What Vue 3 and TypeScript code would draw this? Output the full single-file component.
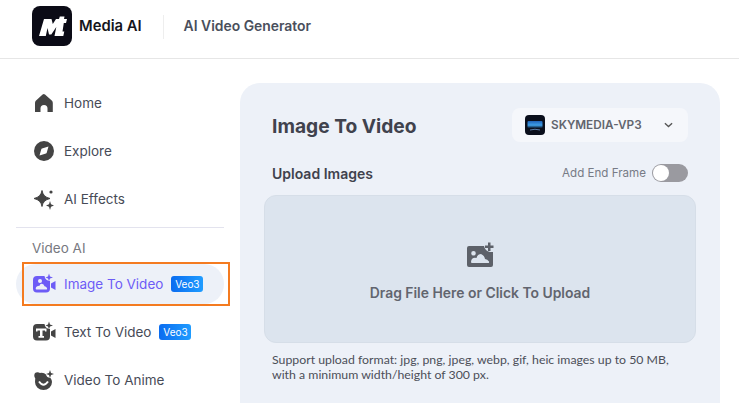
<script setup lang="ts">
const mainNav = [
  { label: 'Home', icon: 'home' },
  { label: 'Explore', icon: 'explore' },
  { label: 'AI Effects', icon: 'effects' },
]
const videoNav = [
  { label: 'Image To Video', icon: 'image', badge: true, active: true },
  { label: 'Text To Video', icon: 'text', badge: true, active: false },
  { label: 'Video To Anime', icon: 'anime', badge: false, active: false },
]
</script>

<template>
  <div class="page">
    <header class="header">
      <div class="logo">
        <svg viewBox="0 0 40 40" width="40" height="40">
          <rect width="40" height="40" rx="8" fill="#0b0b16" />
          <path d="M7 30 L12 13 H19.500 L20.800 18 L24 13 H27 L27.800 10.500 H32.500 L32 13 H35 L34 17 H31.800 L30.500 25.500 H32.300 L31.300 30 H22.500 L24.300 21 L19.300 28.500 H17 L15.500 22 L13.800 30 Z" fill="#fff" />
        </svg>
      </div>
      <span class="brand">Media AI</span>
      <span class="header-line"></span>
      <span class="header-title">AI Video Generator</span>
    </header>

    <div class="body">
      <aside class="sidebar">
        <a v-for="item in mainNav" :key="item.label" class="nav-item">
          <svg class="nav-icon" viewBox="0 0 22 22" width="22" height="22" fill="#444">
            <path v-if="item.icon === 'home'" d="M11.800 2 Q12.300 2 13 2.600 L20 8.800 Q20.800 9.600 20.800 11 V20 H15.500 V16.500 Q15.500 13 12 13 Q8.500 13 8.500 16.500 V20 H3 V11 Q3 9.600 3.800 8.800 L10.600 2.600 Q11.300 2 11.800 2 Z" />
            <path v-else-if="item.icon === 'explore'" fill-rule="evenodd" d="M12 1 A10 10 0 1 1 12 21 A10 10 0 1 1 12 1 Z M16.500 6.500 L10 8.500 Q9.500 8.700 9.300 9.200 L7.500 15.500 L14 13.500 Q14.500 13.300 14.700 12.800 Z" />
            <template v-else>
              <path d="M10 2.500 Q11 9 18 10.500 Q11 12 10 18.500 Q9 12 2 10.500 Q9 9 10 2.500 Z" stroke="#444" stroke-width="1" stroke-linejoin="round" />
              <path d="M18 13 L19 16.300 L22 17.500 L19 18.700 L18 22 L17 18.700 L14 17.500 L17 16.300 Z" />
              <circle cx="19" cy="4" r="1.600" />
            </template>
          </svg>
          <span>{{ item.label }}</span>
        </a>

        <div class="side-line"></div>
        <div class="side-title">Video AI</div>

        <a
          v-for="item in videoNav"
          :key="item.label"
          class="nav-item video-item"
          :class="{ active: item.active }"
        >
          <svg class="nav-icon wide" viewBox="0 0 24 22" width="24" height="22" :fill="item.active ? '#6d5cf6' : '#444'">
            <template v-if="item.icon === 'image'">
              <path fill-rule="evenodd" d="M5 3 H12.500 Q13 7.500 18 8 V15.500 Q18 19.500 14 19.500 H5 Q1 19.500 1 15.500 V7 Q1 3 5 3 Z M8 6 A2 2 0 1 0 8 10 A2 2 0 1 0 8 6 Z M4.500 16.500 H14.500 Q15.500 16.500 15 15 Q14 13.300 12.500 13.300 Q11.800 10.500 9.500 10.800 Q8 11 7.500 12.800 Q4 12.800 3.700 15.500 Q3.700 16.500 4.500 16.500 Z" />
              <path d="M19 10.500 L23.500 8 V17 L19 14.500 Z" />
              <path d="M17 0.500 L18 3.500 L21 4.500 L18 5.500 L17 8 L16 5.500 L13.500 4.500 L16 3.500 Z" />
            </template>
            <template v-else-if="item.icon === 'text'">
              <path fill-rule="evenodd" d="M5 3 H12.500 Q13 7.500 18 8 V15.500 Q18 19.500 14 19.500 H5 Q1 19.500 1 15.500 V7 Q1 3 5 3 Z M4 7.500 V10.500 H5.500 V9.500 H8 V15 H6.500 V16.700 H12 V15 H10.500 V9.500 H13 V10.500 H14.500 V7.500 Z" />
              <path d="M19 10.500 L23.500 8 V17 L19 14.500 Z" />
              <path d="M17 0.500 L18 3.500 L21 4.500 L18 5.500 L17 8 L16 5.500 L13.500 4.500 L16 3.500 Z" />
            </template>
            <template v-else>
              <circle cx="5.500" cy="6.500" r="3.200" />
              <path d="M5 5 Q11 2.500 14 5.500 Q14.500 8.500 18.500 9 Q20 11 20 13 A8.500 8 0 0 1 3 13 Q3 8 5 5 Z" />
              <path d="M7 12.500 Q11.500 19 16 12.500" fill="none" stroke="#fff" stroke-width="2" />
              <path d="M18 1 L19 4 L22 5 L19 6 L18 9 L17 6 L14 5 L17 4 Z" />
            </template>
          </svg>
          <span>{{ item.label }}</span>
          <span v-if="item.badge" class="badge">Veo3</span>
        </a>
      </aside>

      <main class="panel">
        <div class="panel-head">
          <h1>Image To Video</h1>
          <div class="model-select">
            <svg viewBox="0 0 20 20" width="20" height="20">
              <defs>
                <linearGradient id="model-g" x1="0" y1="0" x2="0" y2="1">
                  <stop offset="0" stop-color="#1f62b8" />
                  <stop offset="0.6" stop-color="#3fa0e8" />
                  <stop offset="1" stop-color="#0a1a30" />
                </linearGradient>
              </defs>
              <rect width="20" height="20" rx="4" fill="#0a0f1c" />
              <rect x="2.500" y="6" width="15" height="7" rx="1" fill="url(#model-g)" />
              <path d="M5 15 Q10 13.500 15 15" stroke="#5d7fa8" stroke-width="1" fill="none" />
            </svg>
            <span class="model-name">SKYMEDIA-VP3</span>
            <svg class="chevron" viewBox="0 0 10 6" width="9" height="6" fill="none" stroke="#555" stroke-width="1.500">
              <path d="M1 1 L5 4.700 L9 1" />
            </svg>
          </div>
        </div>

        <div class="upload-head">
          <span class="upload-title">Upload Images</span>
          <div class="end-frame">
            <span>Add End Frame</span>
            <span class="switch"><i></i></span>
          </div>
        </div>

        <div class="dropzone">
          <svg viewBox="0 0 28 26" width="28" height="26">
            <path fill="#5d6169" fill-rule="evenodd" d="M3 4 H18 Q19 9 24 10 L27 10 V23 Q27 25 25 25 H3 Q1 25 1 23 V6 Q1 4 3 4 Z M7.500 9 A2.300 2.300 0 1 0 7.500 13.600 A2.300 2.300 0 1 0 7.500 9 Z M6 21 H22 Q23.500 21 23 19.500 Q21.500 17 19 17 Q18.500 13.500 15 12 Q11.500 12 10.500 16 Q5.500 15 5 20 Q5 21 6 21 Z" />
            <path d="M22 0.500 H24.500 V3.500 H27.500 V6 H24.500 V9 H22 V6 H19 V3.500 H22 Z" fill="#5d6169" />
          </svg>
          <p>Drag File Here or Click To Upload</p>
        </div>

        <p class="hint">Support upload format: jpg, png, jpeg, webp, gif, heic images up to 50 MB, with a minimum width/height of 300 px.</p>
      </main>
    </div>
  </div>
</template>

<style>
html, body {
  margin: 0;
  background: #fff;
  overflow: hidden;
}
</style>

<style scoped>
.page {
  width: 739px;
  height: 403px;
  overflow: hidden;
  font-family: Inter, "Liberation Sans", sans-serif;
  color: #444;
}

.header {
  height: 59px;
  box-sizing: border-box;
  border-bottom: 1px solid #e6e6e6;
  display: flex;
  align-items: flex-start;
  padding: 6px 0 0 32px;
}

.logo {
  width: 40px;
  height: 40px;
}

.brand {
  margin: 9px 0 0 7px;
  font-size: 14.8px;
  line-height: 22px;
  font-weight: 600;
  color: #15151c;
}

.header-line {
  width: 1px;
  height: 24px;
  margin: 9px 20px 0 21px;
  background: #eeeeee;
}

.header-title {
  margin-top: 9px;
  font-size: 13.9px;
  line-height: 22px;
  font-weight: 600;
  color: #4a4f5c;
}

.body {
  display: flex;
}

.sidebar {
  width: 208px;
  margin: 20px 0 0 16px;
  flex: none;
}

.nav-item {
  display: flex;
  align-items: center;
  height: 48px;
  padding-left: 16px;
  font-size: 13.5px;
  color: #474b57;
}

.nav-icon {
  margin: 0 10px 0 0;
  flex: none;
}

.nav-icon.wide {
  margin-right: 8px;
}

.side-line {
  height: 1px;
  margin-top: 4px;
  background: #e3e3ee;
}

.side-title {
  margin: 12px 0 0 16px;
  font-size: 13.5px;
  line-height: 17px;
  color: #77797f;
}

.video-item {
  position: relative;
}

.video-item.active {
  margin-top: 7px;
  height: 40px;
  margin-bottom: 4px;
  border-radius: 20px;
  background: #edf1f8;
  color: #6d5cf6;
}

.video-item.active::after {
  content: "";
  position: absolute;
  left: 6px;
  right: -6px;
  top: -2px;
  bottom: -2px;
  border: 2px solid #f47b20;
  pointer-events: none;
}

.badge {
  margin-left: 8px;
  width: 32px;
  height: 16px;
  border-radius: 3px;
  background: linear-gradient(90deg, #0a6cf0, #1f9cff);
  color: #fff;
  font-size: 10px;
  line-height: 16px;
  text-align: center;
}

.panel {
  width: 480px;
  height: 400px;
  margin: 24px 0 0 16px;
  box-sizing: border-box;
  padding: 25px 24px 0;
  border-radius: 20px;
  background: #edf1f8;
  flex: none;
}

.panel-head {
  display: flex;
  justify-content: space-between;
  align-items: center;
  padding: 0 8px;
}

h1 {
  margin: 2px 0 0;
  font-size: 19.2px;
  font-weight: 700;
  color: #40424d;
}

.model-select {
  width: 176px;
  height: 34px;
  box-sizing: border-box;
  display: flex;
  align-items: center;
  padding: 0 15px 0 13px;
  border-radius: 8px;
  background: #f5f7fb;
}

.model-name {
  margin-left: 6px;
  font-size: 11.75px;
  font-weight: 600;
  color: #62656e;
}

.chevron {
  margin-left: auto;
}

.upload-head {
  display: flex;
  justify-content: space-between;
  align-items: center;
  margin-top: 21px;
  padding: 0 8px;
  height: 20px;
}

.upload-title {
  font-size: 14px;
  font-weight: 600;
  color: #40424d;
}

.end-frame {
  display: flex;
  align-items: center;
  font-size: 11.6px;
  color: #777b86;
}

.switch {
  width: 36px;
  height: 18px;
  margin-left: 6px;
  border-radius: 9px;
  background: #9a9aa0;
  position: relative;
}

.switch i {
  position: absolute;
  left: 1px;
  top: 1px;
  width: 16px;
  height: 16px;
  border-radius: 50%;
  background: #fff;
}

.dropzone {
  height: 148px;
  margin-top: 12px;
  box-sizing: border-box;
  padding-top: 46px;
  border: 1px solid #d6dee8;
  border-radius: 12px;
  background: #dce4ee;
  text-align: center;
}

.dropzone svg {
  display: block;
  margin: 0 auto;
}

.dropzone p {
  margin: 16px 0 0;
  font-size: 13.9px;
  line-height: 18px;
  font-weight: 600;
  color: #62656e;
}

.hint {
  margin: 9px 0 0;
  padding: 0 8px;
  font-family: Lato, Inter, sans-serif;
  font-size: 12.3px;
  line-height: 15px;
  color: #4c4f58;
}
</style>
